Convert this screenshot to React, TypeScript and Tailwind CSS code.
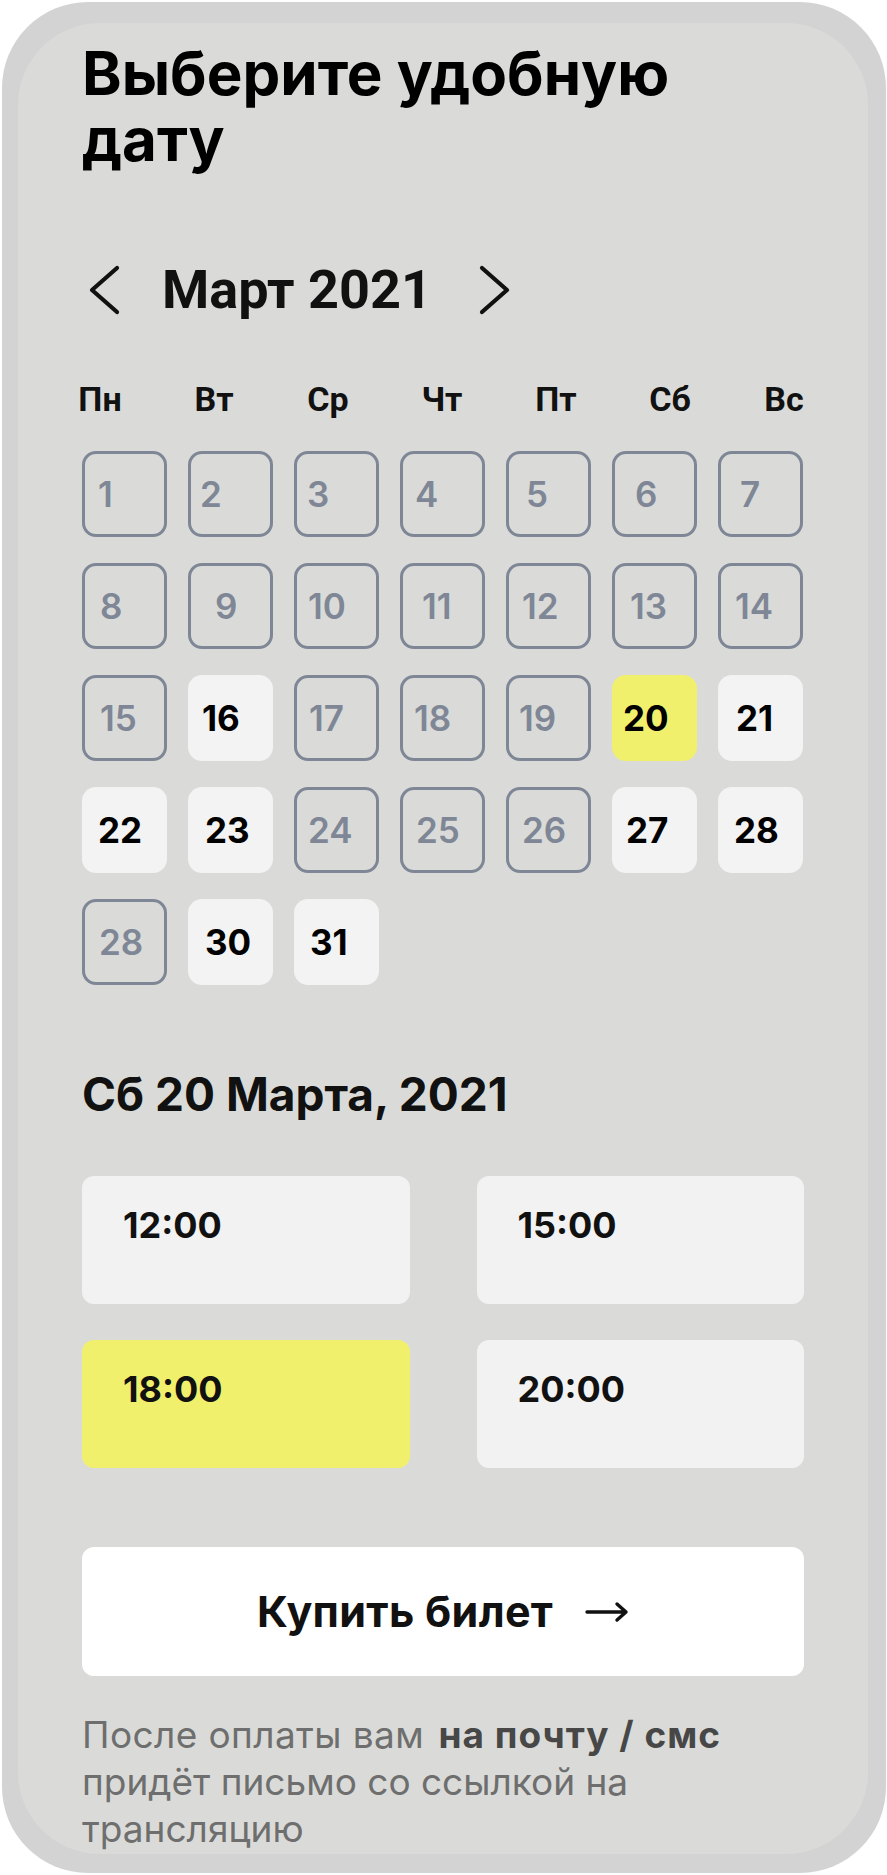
import React from "react";

const M = "[font-family:Inter,'Noto_Sans',sans-serif]";
const R = "[font-family:Roboto,'Noto_Sans',sans-serif]";

type Cell = { d: number; s: "off" | "on" | "sel"; pl: string };

const cells: Cell[] = [
  { d: 1, s: "off", pl: "pl-[13px]" },
  { d: 2, s: "off", pl: "pl-[9px]" },
  { d: 3, s: "off", pl: "pl-[10px]" },
  { d: 4, s: "off", pl: "pl-[12px]" },
  { d: 5, s: "off", pl: "pl-[17px]" },
  { d: 6, s: "off", pl: "pl-[20px]" },
  { d: 7, s: "off", pl: "pl-[19px]" },
  { d: 8, s: "off", pl: "pl-[15px]" },
  { d: 9, s: "off", pl: "pl-[24px]" },
  { d: 10, s: "off", pl: "pl-[11px]" },
  { d: 11, s: "off", pl: "pl-[19px]" },
  { d: 12, s: "off", pl: "pl-[13px]" },
  { d: 13, s: "off", pl: "pl-[15px]" },
  { d: 14, s: "off", pl: "pl-[14px]" },
  { d: 15, s: "off", pl: "pl-[15px]" },
  { d: 16, s: "on", pl: "pl-[11px]" },
  { d: 17, s: "off", pl: "pl-[12px]" },
  { d: 18, s: "off", pl: "pl-[11px]" },
  { d: 19, s: "off", pl: "pl-[10px]" },
  { d: 20, s: "sel", pl: "pl-[8px]" },
  { d: 21, s: "on", pl: "pl-[15px]" },
  { d: 22, s: "on", pl: "pl-[13px]" },
  { d: 23, s: "on", pl: "pl-[14px]" },
  { d: 24, s: "off", pl: "pl-[11px]" },
  { d: 25, s: "off", pl: "pl-[13px]" },
  { d: 26, s: "off", pl: "pl-[13px]" },
  { d: 27, s: "on", pl: "pl-[11px]" },
  { d: 28, s: "on", pl: "pl-[13px]" },
  { d: 28, s: "off", pl: "pl-[14px]" },
  { d: 30, s: "on", pl: "pl-[14px]" },
  { d: 31, s: "on", pl: "pl-[13px]" },
];

const stateCls: Record<Cell["s"], string> = {
  off: "border-[#7f8796] text-[#7f8796] font-semibold",
  on: "border-transparent bg-[#f3f3f3] text-black font-bold",
  sel: "border-transparent bg-[#f1f06c] text-black font-bold",
};

const days = ["Пн", "Вт", "Ср", "Чт", "Пт", "Сб", "Вс"];

const slots = [
  { t: "12:00", sel: false },
  { t: "15:00", sel: false },
  { t: "18:00", sel: true },
  { t: "20:00", sel: false },
];

function Chevron({ dir }: { dir: "l" | "r" }) {
  return (
    <svg width="32" height="50" viewBox="0 0 32 50" fill="none">
      <polyline
        points={dir === "l" ? "29,3 4,25 29,47" : "3,3 28,25 3,47"}
        stroke="#111"
        strokeWidth="4.2"
        strokeLinecap="round"
        strokeLinejoin="round"
      />
    </svg>
  );
}

export default function App() {
  return (
    <div className="w-[887px] h-[1875px] bg-white pt-[2px] pl-[2px]">
      <div className="w-[884px] h-[1871px] rounded-[86px] bg-[#d3d3d3] pt-[21px] pl-[16px] pr-[18px] pb-[19px]">
        <div className="h-full rounded-[82px] bg-[#dadbd8] overflow-hidden px-[64px] pt-[17px]">
          <h1 className={`${M} text-[60px] leading-[66px] font-bold text-black`}>
            Выберите удобную
            <br />
            дату
          </h1>

          <div className="mt-[92px] h-[52px] flex items-center">
            <div className="ml-[6px]">
              <Chevron dir="l" />
            </div>
            <span className={`${R} ml-[42px] text-[54px] leading-[52px] font-bold text-[#111]`}>
              Март 2021
            </span>
            <div className="ml-[47px]">
              <Chevron dir="r" />
            </div>
          </div>

          <div
            className={`${R} mt-[66px] -ml-[4px] w-[728px] flex justify-between text-[34px] leading-[34px] font-bold text-[#111]`}
          >
            {days.map((d) => (
              <span key={d} className="w-[44px] text-center whitespace-nowrap">
                {d}
              </span>
            ))}
          </div>

          <div className="mt-[35px] grid grid-cols-[repeat(7,85px)] gap-x-[21px] gap-y-[26px]">
            {cells.map((c, i) => (
              <div
                key={i}
                className={`${M} h-[86px] rounded-[14px] border-[3px] flex items-center text-[35px] leading-none ${c.pl} ${stateCls[c.s]}`}
              >
                {c.d}
              </div>
            ))}
          </div>

          <h2 className={`${M} mt-[86px] text-[46px] leading-[46px] font-bold text-[#111]`}>
            Сб 20 Марта, 2021
          </h2>

          <div className="mt-[59px] grid grid-cols-2 gap-x-[67px] gap-y-[36px]">
            {slots.map((s) => (
              <div
                key={s.t}
                className={`${M} h-[128px] rounded-[12px] pl-[41px] pt-[31px] text-[36px] leading-[36px] font-bold text-[#111] ${
                  s.sel ? "bg-[#f1f06c]" : "bg-[#f2f2f2]"
                }`}
              >
                {s.t}
              </div>
            ))}
          </div>

          <button
            className={`${M} mt-[79px] w-full h-[129px] rounded-[12px] bg-white flex items-center justify-center text-[43px] tracking-[0.3px] leading-none font-bold text-[#111]`}
          >
            <span>Купить билет</span>
            <svg className="ml-[32px]" width="44" height="22" viewBox="0 0 44 22" fill="none">
              <path
                d="M2 11 H41 M32 3 L41 11 L32 19"
                stroke="#111"
                strokeWidth="3.4"
                strokeLinecap="round"
                strokeLinejoin="round"
              />
            </svg>
          </button>

          <p className={`${M} mt-[35px] text-[37px] leading-[47px] text-[#6e6e6e]`}>
            <span className="tracking-[0.4px]">После оплаты вам</span>{" "}
            <span className="ml-[4px] font-bold tracking-[1px] text-[#474747]">на почту / смс</span>
            <br />
            придёт письмо со ссылкой на
            <br />
            трансляцию
          </p>
        </div>
      </div>
    </div>
  );
}
